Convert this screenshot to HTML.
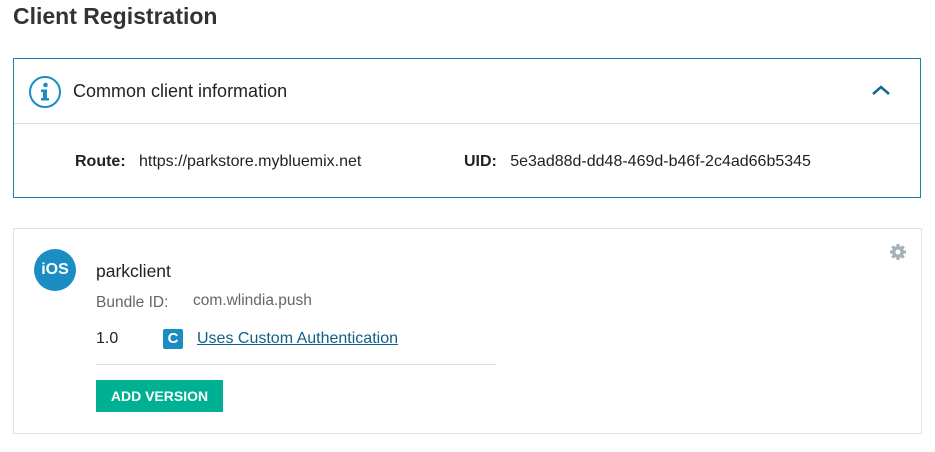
<!DOCTYPE html>
<html><head><meta charset="utf-8"><style>
body{margin:0;width:935px;height:452px;background:#fff;font-family:"Liberation Sans",Helvetica,Arial,sans-serif;color:#222;position:relative;overflow:hidden}
.a{position:absolute;white-space:nowrap}
</style></head><body>
<div class="a" style="left:13px;top:3px;font-size:23px;font-weight:bold;color:#333">Client Registration</div>
<div class="a" style="left:13px;top:58px;width:906px;height:138px;border:1px solid #1b7fb0"></div>
<div class="a" style="left:14px;top:123px;width:906px;height:1px;background:#ddd"></div>
<svg class="a" style="left:28px;top:75px" width="34" height="34" viewBox="0 0 34 34"><circle cx="17" cy="17" r="15" fill="none" stroke="#1b8dc3" stroke-width="2"/><circle cx="17.5" cy="10" r="2.3" fill="#1b8dc3"/><path d="M13 14.5h6v8.5h2v2.5h-8v-2.5h2v-6h-2z" fill="#1b8dc3"/></svg>
<div class="a" style="left:73px;top:81px;font-size:18px;color:#222">Common client information</div>
<svg class="a" style="left:871px;top:83px" width="20" height="14" viewBox="0 0 20 14"><path d="M2 11L10 4l8 7" fill="none" stroke="#0e6a95" stroke-width="2.5"/></svg>
<div class="a" style="left:75px;top:153px;font-size:16px"><b>Route:</b>&nbsp;&nbsp; https://parkstore.mybluemix.net</div>
<div class="a" style="left:464px;top:153px;font-size:16px"><b>UID:</b>&nbsp;&nbsp; 5e3ad88d-dd48-469d-b46f-2c4ad66b5345</div>
<div class="a" style="left:13px;top:228px;width:907px;height:204px;border:1px solid #e2e2e2"></div>
<div class="a" style="left:34px;top:249px;width:42px;height:42px;border-radius:50%;background:#1b8dc3;color:#fff;font-size:16px;font-weight:bold;line-height:42px;text-align:center">iOS</div>
<div class="a" style="left:96px;top:261px;font-size:17.5px;color:#222">parkclient</div>
<div class="a" style="left:96px;top:294px;font-size:15.5px;color:#666">Bundle ID:</div>
<div class="a" style="left:193px;top:292px;font-size:15.5px;color:#666">com.wlindia.push</div>
<div class="a" style="left:96px;top:330px;font-size:16px">1.0</div>
<div class="a" style="left:163px;top:329px;width:20px;height:20px;border-radius:2px;background:#1b8dc3;color:#fff;font-weight:bold;font-size:15px;line-height:20px;text-align:center">C</div>
<div class="a" style="left:197px;top:330px;font-size:16px;color:#0e5f8a;text-decoration:underline">Uses Custom Authentication</div>
<div class="a" style="left:96px;top:364px;width:400px;height:1px;background:#ddd"></div>
<div class="a" style="left:96px;top:380px;width:127px;height:32px;background:#00b093;color:#fff;font-weight:bold;font-size:14px;line-height:33px;text-align:center">ADD VERSION</div>
<svg class="a" style="left:889px;top:243px" width="18" height="18" viewBox="0 0 18 18"><g fill="#a3b1bb"><circle cx="9" cy="9" r="6"/><g stroke="#a3b1bb" stroke-width="3"><path d="M9 1v16M1 9h16M3.3 3.3l11.4 11.4M14.7 3.3L3.3 14.7"/></g></g><circle cx="9" cy="9" r="2.5" fill="#fff"/></svg>
</body></html>
